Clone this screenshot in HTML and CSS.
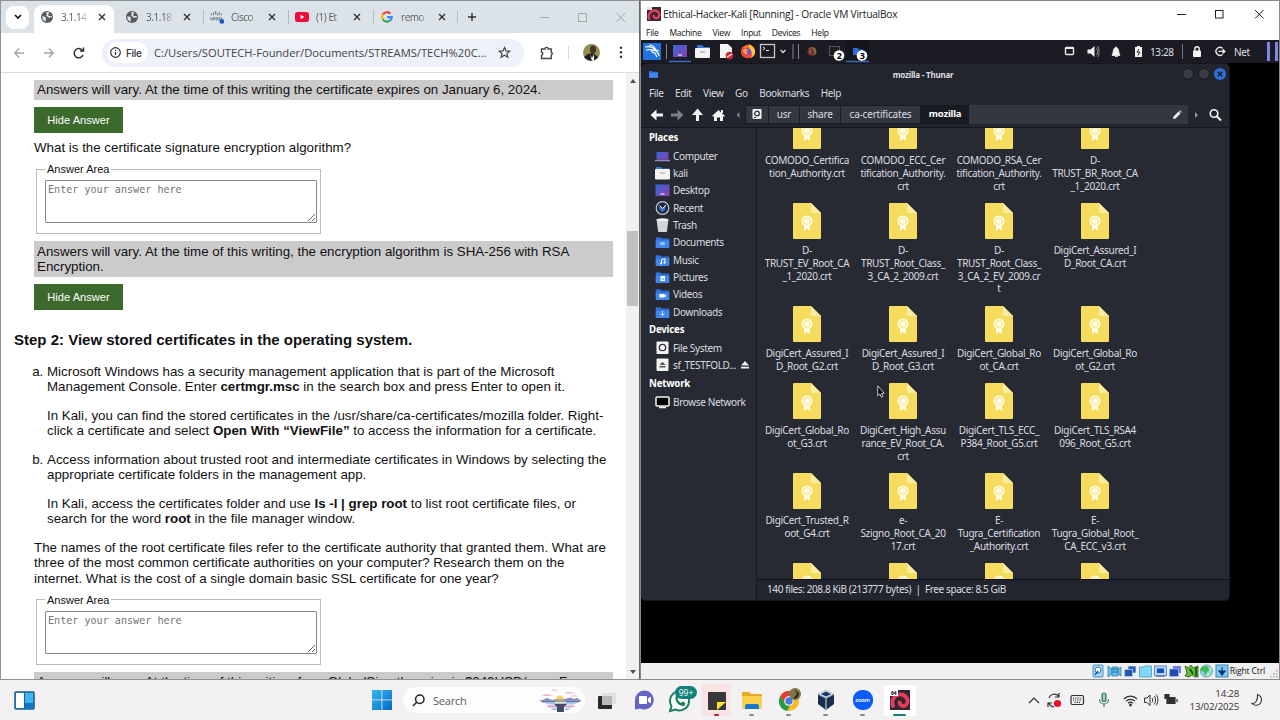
FILE: index.html
```html
<!DOCTYPE html>
<html lang="en">
<head>
    <meta charset="UTF-8">
    <title>Desktop</title>
    <link rel="stylesheet" href="styles.css">
</head>
<body>
    <svg class="defs" width="0" height="0">
        <defs>
            <linearGradient id="purple" x1="0" y1="0" x2="1" y2="1"><stop offset="0" stop-color="#3369d6"/><stop offset="1" stop-color="#8c3fb0"/></linearGradient>
            <linearGradient id="winblue" x1="0" y1="0" x2="1" y2="1"><stop offset="0" stop-color="#35b8f1"/><stop offset="1" stop-color="#0668c9"/></linearGradient>
        </defs>
        <symbol id="cert" viewBox="0 0 28 36">
            <path d="M1 0h17l10 10v25a1 1 0 0 1-1 1H1a1 1 0 0 1-1-1V1a1 1 0 0 1 1-1z" fill="#f5dc5f"/>
            <path d="M18 0l10 10H19a1 1 0 0 1-1-1z" fill="#faeba0"/>
            <path d="M11 21h6v7L14 25.800 11 28z" fill="#fffbe6"/>
            <circle cx="14" cy="18" r="5.500" fill="#fffbe6"/>
            <circle cx="14" cy="18" r="3.400" fill="none" stroke="#f5dc5f" stroke-width=".8"/>
        </symbol>
        <symbol id="globe" viewBox="0 0 12 12">
            <circle cx="6" cy="6" r="6" fill="#565b60"/>
            <path d="M1.300 5.200l2.700.6 1.200 1.400-.7 1.200.4 2.200C2.500 10.300 1 8.300 1.300 5.200zM5 1.200l2.600-.1.600 1-1.200 1.500.9 1.300 2.800.2.100 1.700-1.700-.5-1 .6-1.500-1.200L5 4.500l.8-1.200z" fill="#dfe5e9"/>
        </symbol>
        <symbol id="x" viewBox="0 0 8 8"><path d="M1 1l6 6M7 1L1 7" stroke="currentColor" stroke-width="1.400" fill="none"/></symbol>
        <symbol id="folder" viewBox="0 0 14 12">
            <path d="M0 2.500a1.300 1.300 0 0 1 1.300-1.300H4.500L6 2.500h6.700a1.300 1.300 0 0 1 1.300 1.300v6.900a1.300 1.300 0 0 1-1.300 1.300H1.300a1.300 1.300 0 0 1-1.300-1.300z" fill="#2d6ed8"/>
            <path d="M0 4.500h14v6.200a1.300 1.300 0 0 1-1.300 1.300H1.300a1.300 1.300 0 0 1-1.300-1.300z" fill="#3f86ef"/>
        </symbol>
        <symbol id="firefox" viewBox="0 0 16 16">
            <circle cx="8" cy="8.500" r="6.800" fill="#ff7426"/>
            <path d="M3 3c0 2 1 2 2 2l2 1 4-4c3 2 4.500 4 4 7-1 4-4 6-7 6s-7-2-7-6c0-3 1-4 2-6z" fill="#f8452f"/>
            <path d="M9 1c3 2 6 4 6 8 0 3-2 5-4 6 2-4 1-7-2-9z" fill="#ffc83a"/>
            <circle cx="7.500" cy="8.500" r="3.600" fill="#7d4ccb"/>
            <path d="M3 7c2-2 4-1 5 0-2 1-2 3 0 4-3 1-5-1-5-4z" fill="#ffa436"/>
        </symbol>
    </svg>

    <div class="desktop">
        <div class="windows">
            <!-- Browser -->
            <section class="browser">
                <div class="tabs">
                    <div class="tab-search"><svg width="8" height="6" viewBox="0 0 8 6"><path d="M1 1l3 3 3-3" fill="none" stroke="#111" stroke-width="1.600"/></svg></div>
                    <div class="tab active">
                        <svg class="fav"><use href="#globe"/></svg><span>3.1.14</span><svg class="x"><use href="#x"/></svg>
                    </div>
                    <div class="tab">
                        <svg class="fav"><use href="#globe"/></svg><span>3.1.18</span><svg class="x"><use href="#x"/></svg>
                    </div>
                    <div class="tab">
                        <svg class="fav wide" viewBox="0 0 16 14">
                            <path d="M1.500 3v2M4 1.500v3.500M6.500 0v4M8.500 3v2M10.500 1v4M13 3v2M1 7.500v3M3.500 7v4M5.500 7v3.500M8 7v4M10.500 7v4M13 7.500v3" stroke="#70777c" stroke-width="1.300"/>
                            <circle cx="13.500" cy="12" r="2.700" fill="#1857d1"/>
                        </svg><span>Cisco</span><svg class="x"><use href="#x"/></svg>
                    </div>
                    <div class="tab">
                        <svg class="fav wide" viewBox="0 0 14 10"><rect width="14" height="10" rx="2.500" fill="#f5093a"/><path d="M5.500 2.800v4.400L9.300 5z" fill="#fff"/></svg><span>(1) Et</span><svg class="x"><use href="#x"/></svg>
                    </div>
                    <div class="tab">
                        <svg class="fav" viewBox="0 0 12 12" fill="none" stroke-width="2.200">
                            <path d="M2 3.400A4.800 4.800 0 0 1 9.400 2.600" stroke="#e94335"/><path d="M1.800 8.400A4.800 4.800 0 0 1 2 3.400" stroke="#fabb05"/>
                            <path d="M1.800 8.300A4.800 4.800 0 0 0 8.800 9.700" stroke="#34a853"/><path d="M6 6.100h4.800A4.800 4.800 0 0 1 8.800 9.700" stroke="#4285f4"/>
                        </svg><span>remo</span><svg class="x"><use href="#x"/></svg>
                    </div>
                    <i class="tab-end"></i>
                    <svg class="plus" width="10" height="10" viewBox="0 0 10 10"><path d="M5 1v8M1 5h8" stroke="#333" stroke-width="1.400"/></svg>
                    <svg class="win-controls" width="88" height="12" viewBox="0 0 88 12" fill="none" stroke="#a3a8ab">
                        <path d="M1 6.500h9M77.500 2l8.500 9M86 2l-8.500 9"/><rect x="39.500" y="2.500" width="8" height="8"/>
                    </svg>
                </div>
                <div class="toolbar">
                    <svg class="nav" width="84" height="14" viewBox="0 0 84 14" fill="none" stroke-width="1.300">
                        <path d="M11 7H2M6.200 2.500L1.700 7l4.500 4.500M31 7h9M35.800 2.500L40.300 7l-4.500 4.500" stroke="#a2a5a8"/>
                        <path d="M69.500 4.500A4.600 4.600 0 1 0 70 9M70.500 1.500V5H67" stroke="#333" stroke-width="1.500"/>
                    </svg>
                    <div class="omnibox">
                        <span class="chip"><svg width="11" height="11" viewBox="0 0 11 11" fill="none" stroke="#333"><circle cx="5.500" cy="5.500" r="4.800" stroke-width="1.200"/><path d="M5.500 5v3M5.500 2.800v1.100" stroke-width="1.300"/></svg>File</span>
                        <span class="url">C:/Users/SOUTECH-Founder/Documents/STREAMS/TECH%20C...</span>
                        <svg class="star" width="13" height="13" viewBox="0 0 13 13"><path d="M6.500 1.500l1.500 3.400 3.700.3-2.800 2.400.9 3.600-3.300-1.900-3.300 1.900.9-3.600L1.300 5.200 5 4.900z" fill="none" stroke="#444" stroke-width="1.200"/></svg>
                    </div>
                    <svg class="ext" width="14" height="14" viewBox="0 0 14 14"><path d="M1.500 3H5a1.600 1.600 0 0 1 3.200 0h3v3.200a1.600 1.600 0 0 1 0 3V12.500H1.500V9.500a1.700 1.700 0 0 0 0-3.300z" fill="none" stroke="#444" stroke-width="1.400"/></svg>
                    <i class="bar-sep"></i>
                    <svg class="avatar" width="17" height="17" viewBox="0 0 17 17">
                        <circle cx="8.500" cy="8.500" r="8.500" fill="#8f9152"/><path d="M1 13l4-3 5-1 5 4a8.500 8.500 0 0 1-14 0z" fill="#1e211c"/><ellipse cx="10" cy="5.500" rx="3" ry="4" fill="#4b3426"/><path d="M7 10l2 4 2-4 0 6-2 1z" fill="#fff"/>
                    </svg>
                    <svg class="dots" width="4" height="13" viewBox="0 0 4 13" fill="#333"><circle cx="2" cy="1.700" r="1.200"/><circle cx="2" cy="6.300" r="1.200"/><circle cx="2" cy="10.900" r="1.200"/></svg>
                </div>
                <div class="viewport">
                    <main class="page">
                        <p class="answer">Answers will vary. At the time of this writing the certificate expires on January 6, 2024.</p>
                        <button class="hide">Hide Answer</button>
                        <p class="question">What is the certificate signature encryption algorithm?</p>
                        <fieldset><legend>Answer Area</legend><textarea placeholder="Enter your answer here"></textarea></fieldset>
                        <p class="answer">Answers will vary. At the time of this writing, the encryption algorithm is SHA-256 with RSA<br>Encryption.</p>
                        <button class="hide">Hide Answer</button>
                        <h2>Step 2: View stored certificates in the operating system.</h2>
                        <ol>
                            <li>
                                <p>Microsoft Windows has a security management application that is part of the Microsoft<br>Management Console. Enter <b>certmgr.msc</b> in the search box and press Enter to open it.</p>
                                <p>In Kali, you can find the stored certificates in the /usr/share/ca-certificates/mozilla folder. Right-<br>click a certificate and select <b>Open With “ViewFile”</b> to access the information for a certificate.</p>
                            </li>
                            <li>
                                <p>Access information about trusted root and intermediate certificates in Windows by selecting the<br>appropriate certificate folders in the management app.</p>
                                <p>In Kali, access the certificates folder and use <b>ls -l | grep root</b> to list root certificate files, or<br>search for the word <b>root</b> in the file manager window.</p>
                            </li>
                        </ol>
                        <p class="question">The names of the root certificate files refer to the certificate authority that granted them. What are<br>three of the most common certificate authorities on your computer? Research them on the<br>internet. What is the cost of a single domain basic SSL certificate for one year?</p>
                        <fieldset><legend>Answer Area</legend><textarea placeholder="Enter your answer here"></textarea></fieldset>
                        <p class="answer">Answers will vary. At the time of this writing, from GlobalSign the price is $249USD/year. From</p>
                    </main>
                    <div class="scrollbar"><i class="up"></i><i class="thumb"></i><i class="down"></i></div>
                </div>
            </section>

            <!-- Virtual machine -->
            <section class="vbox">
                <div class="vbox-title">
                    <svg width="14" height="14" viewBox="0 0 14 14"><rect width="14" height="14" fill="#3a2830"/><path d="M2.500 12.500C0 7 4 3 8 3.500c4 .5 5.500 5 3 7-2 1.500-5 0-4-2.500" fill="none" stroke="#e33f60" stroke-width="2.400"/><path d="M0 0h5v3H0z" fill="#ddd"/></svg>
                    <span>Ethical-Hacker-Kali [Running] - Oracle VM VirtualBox</span>
                    <svg class="win-controls" width="90" height="12" viewBox="0 0 90 12" fill="none" stroke="#222"><path d="M1 6.500h9M79 2l8.500 8.500M87.500 2L79 10.500"/><rect x="39.500" y="2.500" width="7.500" height="7.500"/></svg>
                </div>
                <nav class="vbox-menu"><span>File</span><span>Machine</span><span>View</span><span>Input</span><span>Devices</span><span>Help</span></nav>
                <div class="screen">
                    <div class="panel">
                        <svg class="launch" width="290" height="23" viewBox="0 0 290 23">
                            <rect x="2" y="3" width="18" height="17" rx="1" fill="#2272e0"/>
                            <path d="M4 7c4-1 8 0 10 3s4 2 4 6M5 10c4-1 7 0 9 1M8 5c5 0 6 3 7 5l3 1M11 10c-1 2 1 3 3 3l2 4" fill="none" stroke="#fff" stroke-width="1.200"/>
                            <path d="M25.500 4v15M152 4v15M157.500 4v15" stroke="#85868c"/>
                            <rect x="32" y="5" width="14" height="12" fill="url(#purple)"/><path d="M37 15h4" stroke="#fff"/>
                            <path d="M28 21.500h22M205 21.500h23" stroke="#3668c4" stroke-width="1.500"/>
                            <path d="M56 5h5l2 2h6v4H56z" fill="#3775dd"/><rect x="54" y="8" width="15" height="10" rx="1" fill="#f2f2f4"/><path d="M59 12h5" stroke="#999"/>
                            <path d="M79 4h8l4 4v10H79z" fill="#f5f5f5"/><circle cx="88.500" cy="15.500" r="3.800" fill="#cf2831"/><path d="M86 17l5-3" stroke="#fff" stroke-width="1.300"/>
                            <use href="#firefox" x="99" y="3" width="16" height="16"/>
                            <rect x="119.500" y="4.500" width="14" height="13" fill="#1b1c20" stroke="#c9c9cc" stroke-width="1.300"/>
                            <path d="M122 7l2 1.500-2 1.500M125 10.500h3" stroke="#eee" fill="none"/>
                            <path d="M139.500 10l2.500 2.500L144.500 10" stroke="#ddd" fill="none" stroke-width="1.300"/>
                            <g opacity=".5"><use href="#firefox" x="166" y="6" width="10" height="10"/><rect x="188.500" y="6.500" width="10" height="9" fill="#1b1c20" stroke="#8f8f93"/></g>
                            <rect x="205" y="0" width="23" height="20" fill="#15161c"/><path d="M212 8h5l1 1.500h4V15h-10z" fill="#2f6cdb"/>
                            <circle cx="198" cy="15.500" r="5.300" fill="#fff"/><circle cx="221" cy="15.500" r="5.300" fill="#fff"/>
                            <g class="badge-num"><text x="198" y="18.800">2</text><text x="221" y="18.800">3</text></g>
                        </svg>
                        <svg class="tray" width="90" height="23" viewBox="0 0 90 23">
                            <rect x="6.500" y="7.500" width="8" height="7" rx="1" fill="none" stroke="#e8e8ea" stroke-width="1.400"/><path d="M6 8h9" stroke="#e8e8ea" stroke-width="2"/>
                            <path d="M28.500 9.500h3l4-3.500v11l-4-3.500h-3z" fill="#f2f2f2"/><path d="M37 8c2 1 2 6 0 7M38.500 6c2 2 2 9 0 11" fill="none" stroke="#999"/>
                            <path d="M53 15.500c1.500-2 .5-7 4-8.500 3.500 1.500 2.500 6.500 4 8.500zM56 16.500h3" fill="#f2f2f2" stroke="#f2f2f2" stroke-width=".8"/>
                            <path d="M76 7h2V6h3v1h2v10h-7z" fill="#f2f2f2"/><path d="M80 9l-2 3.200h3L79 15.500" fill="none" stroke="#23242b"/>
                        </svg>
                        <span class="clock">13:28</span>
                        <svg class="session" width="50" height="23" viewBox="0 0 50 23"><path d="M4.500 4v15" stroke="#77787e"/><rect x="15" y="10.500" width="8" height="6.500" rx=".8" fill="#f2f2f2"/><path d="M16.800 11V9a2.200 2.200 0 0 1 4.400 0v2" fill="none" stroke="#f2f2f2" stroke-width="1.400"/><path d="M44.500 8.200A4 4 0 1 0 44.500 14.500M40.500 11.400h6M44.500 9.200l2.300 2.200-2.300 2.200" fill="none" stroke="#eee" stroke-width="1.400"/></svg>
                        <span class="net">Net</span>
                        <i class="meter"></i><i class="meter"></i>
                    </div>

                    <div class="thunar">
                        <div class="thunar-title">
                            <svg width="9" height="8"><use href="#folder"/></svg>
                            <b>mozilla - Thunar</b>
                            <i class="round"></i><i class="round"></i><i class="round close"><svg width="6" height="6" viewBox="0 0 8 8"><path d="M1 1l6 6M7 1L1 7" stroke="#0b1a36" stroke-width="2"/></svg></i>
                        </div>
                        <nav class="thunar-menu"><span>File</span><span>Edit</span><span>View</span><span>Go</span><span>Bookmarks</span><span>Help</span></nav>
                        <div class="location">
                            <svg class="arrows" width="103" height="20" viewBox="0 0 103 20">
                                <path d="M12 10h9" stroke="#f4f4f4" stroke-width="3"/><path d="M8.500 10l6-5.500v11z" fill="#f4f4f4"/>
                                <path d="M29 10h7" stroke="#7d7f85" stroke-width="3"/><path d="M41.500 10l-6-5.500v11z" fill="#7d7f85"/>
                                <path d="M55.500 8v8" stroke="#f4f4f4" stroke-width="3"/><path d="M55.500 3.500l5.500 6.500h-11z" fill="#f4f4f4"/>
                                <path d="M70 11l6.500-6 6.500 6-1 .8-1-.8v5h-3v-3.500h-3V16h-3v-5l-1 .8zM79 5h2v3h-2z" fill="#f4f4f4"/>
                                <path d="M97.500 7v6l-3-3z" fill="#7d7f85"/>
                            </svg>
                            <span class="crumb disk"><svg width="10" height="10" viewBox="0 0 10 10"><rect x=".5" width="9" height="10" rx="1" fill="#f2f2f2"/><circle cx="5" cy="4.500" r="2.300" fill="none" stroke="#2e313a" stroke-width="1.300"/><path d="M2 8.500h2" stroke="#2e313a"/></svg></span>
                            <span class="crumb usr">usr</span><span class="crumb share">share</span><span class="crumb ca">ca-certificates</span><span class="crumb current">mozilla</span>
                            <div class="path-rest"><svg width="10" height="10" viewBox="0 0 10 10"><path d="M1 9l.6-2.600L6.500 1.500l2 2L3.600 8.400zM7.200.9l.7-.6 1.800 1.800-.6.700z" fill="#f4f4f4"/></svg></div>
                            <svg class="find" width="40" height="20" viewBox="0 0 40 20"><path d="M7 7v6l3-3z" fill="#95979c"/><circle cx="26" cy="8.500" r="3.800" fill="none" stroke="#f4f4f4" stroke-width="1.600"/><path d="M28.500 11l4.500 4.500" stroke="#f4f4f4" stroke-width="2"/></svg>
                        </div>
                        <div class="thunar-body">
                            <aside class="places">
                                <h4>Places</h4>
                                <ul>
                                    <li><svg viewBox="0 0 15 14"><rect x="1.500" y="3" width="12" height="7.500" fill="url(#purple)"/><path d="M0 11.500h15" stroke="#8d90c8" stroke-width="1.300"/></svg>Computer</li>
                                    <li><svg viewBox="0 0 15 14"><path d="M1 1h5l1.500 1.500H14V6H1z" fill="#3775dd"/><rect y="3" width="15" height="10.500" rx="1" fill="#f3f3f5"/><path d="M5 7h5" stroke="#a0a0a4"/></svg>kali</li>
                                    <li><svg viewBox="0 0 15 14"><rect x=".5" y="1.500" width="14" height="11.500" fill="url(#purple)"/><path d="M5.500 11h4" stroke="#fff"/></svg>Desktop</li>
                                    <li><svg viewBox="0 0 15 14"><circle cx="7.500" cy="7" r="6.300" fill="#20273a" stroke="#c3c6d0" stroke-width="1.200"/><path d="M3 5l4.500 2.500L11 4l-1 5-2.500 2L5 9z" fill="#3a75dd"/><path d="M4.500 4.500l3 3L11 4" stroke="#fff" fill="none"/></svg>Recent</li>
                                    <li><svg viewBox="0 0 15 14"><path d="M1.500 1.500h12L12 13a1 1 0 0 1-1 1H4a1 1 0 0 1-1-1z" fill="#d4d5d8"/><ellipse cx="7.500" cy="1.700" rx="6" ry="1.400" fill="#f4f4f4"/></svg>Trash</li>
                                    <li><svg viewBox="0 0 15 14"><use href="#folder" x=".5" y="1" width="14" height="12"/><ellipse cx="7.500" cy="8.500" rx="2.800" ry="1.600" fill="#a7cbff"/></svg>Documents</li>
                                    <li><svg viewBox="0 0 15 14"><use href="#folder" x=".5" y="1" width="14" height="12"/><path d="M6.500 10.500V6.500l3.500-.8v4" stroke="#fff" fill="none"/><circle cx="6" cy="10.500" r="1" fill="#fff"/><circle cx="9.500" cy="9.800" r="1" fill="#fff"/></svg>Music</li>
                                    <li><svg viewBox="0 0 15 14"><use href="#folder" x=".5" y="1" width="14" height="12"/><rect x="5.500" y="6" width="4.500" height="5" fill="#fff"/><path d="M6.500 9h2.500" stroke="#3f86ef"/></svg>Pictures</li>
                                    <li><svg viewBox="0 0 15 14"><use href="#folder" x=".5" y="1" width="14" height="12"/><path d="M4.500 7h4.500v1l1.700-1v3.500l-1.700-1v1H4.500z" fill="#fff"/></svg>Videos</li>
                                    <li><svg viewBox="0 0 15 14"><use href="#folder" x=".5" y="1" width="14" height="12"/><path d="M7.500 5.800v4.500M5.500 8.500l2 2 2-2" stroke="#cfe3ff" fill="none"/></svg>Downloads</li>
                                </ul>
                                <h4>Devices</h4>
                                <ul>
                                    <li><svg viewBox="0 0 15 14"><rect x="1.500" y=".5" width="12" height="12.500" rx="1" fill="#f5f5f5"/><circle cx="7.500" cy="6.500" r="3.200" fill="none" stroke="#33363d" stroke-width="1.300"/></svg>File System</li>
                                    <li><svg viewBox="0 0 15 14"><rect x="1.500" y=".5" width="12" height="12.500" rx="1" fill="#f5f5f5"/><path d="M7.500 3.800l3 3.300h-6zM4.500 8h6v1.500h-6z" fill="#555"/></svg>sf_TESTFOLD...<svg class="eject" viewBox="0 0 8 8"><path d="M4 0l4 4.500H0zM0 5.800h8V7.500H0z" fill="#f0f0f0"/></svg></li>
                                </ul>
                                <h4>Network</h4>
                                <ul>
                                    <li><svg viewBox="0 0 15 14"><rect x="1" y="2" width="13" height="9" rx="1" fill="#000" stroke="#f5f5f5" stroke-width="1.500"/><path d="M4 12.500h7" stroke="#f5f5f5" stroke-width="1.500"/></svg>Browse Network</li>
                                </ul>
                            </aside>
                            <div class="main">
                                <div class="files">
                                    <div class="file"><svg><use href="#cert"/></svg>COMODO_Certifica<br>tion_Authority.crt</div>
                                    <div class="file"><svg><use href="#cert"/></svg>COMODO_ECC_Cer<br>tification_Authority.<br>crt</div>
                                    <div class="file"><svg><use href="#cert"/></svg>COMODO_RSA_Cer<br>tification_Authority.<br>crt</div>
                                    <div class="file"><svg><use href="#cert"/></svg>D-<br>TRUST_BR_Root_CA<br>_1_2020.crt</div>
                                    <div class="file"><svg><use href="#cert"/></svg>D-<br>TRUST_EV_Root_CA<br>_1_2020.crt</div>
                                    <div class="file"><svg><use href="#cert"/></svg>D-<br>TRUST_Root_Class_<br>3_CA_2_2009.crt</div>
                                    <div class="file"><svg><use href="#cert"/></svg>D-<br>TRUST_Root_Class_<br>3_CA_2_EV_2009.cr<br>t</div>
                                    <div class="file"><svg><use href="#cert"/></svg>DigiCert_Assured_I<br>D_Root_CA.crt</div>
                                    <div class="file"><svg><use href="#cert"/></svg>DigiCert_Assured_I<br>D_Root_G2.crt</div>
                                    <div class="file"><svg><use href="#cert"/></svg>DigiCert_Assured_I<br>D_Root_G3.crt</div>
                                    <div class="file"><svg><use href="#cert"/></svg>DigiCert_Global_Ro<br>ot_CA.crt</div>
                                    <div class="file"><svg><use href="#cert"/></svg>DigiCert_Global_Ro<br>ot_G2.crt</div>
                                    <div class="file"><svg><use href="#cert"/></svg>DigiCert_Global_Ro<br>ot_G3.crt</div>
                                    <div class="file"><svg><use href="#cert"/></svg>DigiCert_High_Assu<br>rance_EV_Root_CA.<br>crt</div>
                                    <div class="file"><svg><use href="#cert"/></svg>DigiCert_TLS_ECC_<br>P384_Root_G5.crt</div>
                                    <div class="file"><svg><use href="#cert"/></svg>DigiCert_TLS_RSA4<br>096_Root_G5.crt</div>
                                    <div class="file"><svg><use href="#cert"/></svg>DigiCert_Trusted_R<br>oot_G4.crt</div>
                                    <div class="file"><svg><use href="#cert"/></svg>e-<br>Szigno_Root_CA_20<br>17.crt</div>
                                    <div class="file"><svg><use href="#cert"/></svg>E-<br>Tugra_Certification<br>_Authority.crt</div>
                                    <div class="file"><svg><use href="#cert"/></svg>E-<br>Tugra_Global_Root_<br>CA_ECC_v3.crt</div>
                                    <div class="file"><svg><use href="#cert"/></svg></div>
                                    <div class="file"><svg><use href="#cert"/></svg></div>
                                    <div class="file"><svg><use href="#cert"/></svg></div>
                                    <div class="file"><svg><use href="#cert"/></svg></div>
                                </div>
                                <div class="status">140 files: 208.8 KiB (213777 bytes)&nbsp; |&nbsp; Free space: 8.5 GiB</div>
                            </div>
                        </div>
                    </div>
                    <svg class="cursor" width="8" height="13" viewBox="0 0 8 13"><path d="M.8.800v10l2-1.900 1.500 3.300 1.600-.7L4.500 8.300H7.200z" fill="#000" stroke="#ddd" stroke-width=".9"/></svg>
                </div>
                <div class="vbox-status">
                    <svg width="138" height="14" viewBox="0 0 138 14">
                        <rect x="1" y="1" width="10" height="12" rx="1" fill="#a5d8f5" stroke="#4a91c4"/><circle cx="6" cy="6" r="3" fill="#fff" stroke="#3474ae"/><path d="M3 11l3-4" stroke="#124e8c" stroke-width="1.300"/>
                        <path d="M16 2l4 3v5l-4 3zM20 3h6v9h-6zM29 3v9l-3-2V5z" fill="#6cc1e6" stroke="#2b84ba" stroke-width=".8"/><path d="M21 5h4M21 8h4" stroke="#155b9b"/>
                        <rect x="36" y="2" width="8" height="7" fill="#2d60bb" stroke="#d5e6ff" stroke-width=".7"/><rect x="32.500" y="5.500" width="8" height="7" fill="#2456ac" stroke="#bad5ff" stroke-width=".7"/>
                        <path d="M47.500 3h4l1-1h7v11h-12z" fill="#82d8f7" stroke="#499ec8" stroke-width=".8"/>
                        <rect x="62.500" y="2" width="12" height="9.500" fill="#aed6ff" stroke="#6687b8"/><rect x="65" y="4.500" width="7" height="4.500" fill="#174eae"/><path d="M64 12.500h9" stroke="#7389a8"/>
                        <rect x="81" y="2" width="8" height="7" fill="#7278e0"/><rect x="77.500" y="5" width="9" height="7.500" fill="#254ab5" stroke="#9db7ff" stroke-width=".7"/>
                        <path d="M93 2l3 2 3-3 2 3 5-2v11h-3l-3-2-3 2-4-1 2-3z" fill="#5fbd32" stroke="#285716" stroke-width=".8"/><path d="M98 5l3 5M104 3v9" stroke="#123e18" stroke-width="1.500"/>
                        <circle cx="114.500" cy="7" r="6" fill="#8fd9ed" stroke="#3898b8" stroke-width=".8"/><path d="M110 3l5-1 3 4-3 2-2 4-1-4-4-2z" fill="#40b94c"/><path d="M116 9v3M120 4l-3 2" stroke="#e4f36c" stroke-width="1.500"/>
                        <rect x="124" y="1" width="12" height="12" fill="#82c9ef" stroke="#4287ba"/><path d="M130 3v5M127 7h6l-3 4z" stroke="#0b3573" fill="#0b3573" stroke-width="1.200"/>
                    </svg>
                    <span>Right Ctrl</span>
                    <svg class="grip" width="8" height="8" viewBox="0 0 8 8" fill="#aaa"><path d="M6 0h1.500v1.500H6zM3 3h1.500v1.500H3zM6 3h1.500v1.500H6zM0 6h1.500v1.500H0zM3 6h1.500v1.500H3zM6 6h1.500v1.500H6z"/></svg>
                </div>
            </section>
        </div>

        <!-- Taskbar -->
        <footer class="taskbar">
            <svg class="widgets" width="21" height="19" viewBox="0 0 21 19"><rect x="1" y="1" width="19" height="17" rx="1" fill="#3cb7ee" stroke="#1d5f95" stroke-width="1.600"/><path d="M2 2h8v15H2z" fill="#fff"/><path d="M11 12h8v5h-8z" fill="#1470cd"/><path d="M10.500 1v17" stroke="#1d5f95"/></svg>
            <svg class="start" width="20" height="20" viewBox="0 0 20 20" fill="url(#winblue)"><path d="M0 0h9.500v9.500H0zM10.300 0H20v9.500h-9.700zM0 10.300h9.500V20H0zM10.300 10.300H20V20h-9.700z"/></svg>
            <div class="search">
                <svg width="13" height="13" viewBox="0 0 13 13" fill="none" stroke="#222" stroke-width="1.500"><circle cx="7.800" cy="5.200" r="4.200"/><path d="M4.700 8.300L1 12"/></svg>
                <span>Search</span>
                <svg class="scene" width="43" height="24" viewBox="0 0 43 24">
                    <path d="M12 2.500c2-2 5-1 6-.5l3 .5zM3 8c3-3 6-2 8-1l4 1zM25 5.500c3-2.500 6-2 8-1l5 1zM32 8.500c2-2 5-1 7 0z" fill="#efb9c6"/>
                    <path d="M2 12.500l6-2.500 5 2 4-1h9l5-1.500 4 1.500 3-1 4 2.500z" fill="#8a86b5"/>
                    <path d="M17 11.500a4 4 0 0 1 8 0z" fill="#f6d365"/>
                    <path d="M0 12.500h43l-4 2H4z" fill="#5f73a6"/>
                    <path d="M5 14.500h33l-3 2H9z" fill="#a3c9ea"/><path d="M16 13.500h11v1.500H16z" fill="#f3dc8c"/>
                    <path d="M7 17.500h13l-2 2h-8zM25 17.500h12l-4 2h-7z" fill="#d9a2c8"/><path d="M12 20.500h6v1.500h-5zM26 20.500h6l-3 1.500h-3z" fill="#8fb5e0"/>
                    <path d="M15 16h13l-3 3v5h-7v-5z" fill="#474b68"/>
                </svg>
            </div>
            <div class="apps">
                <span class="app"><svg viewBox="0 0 24 24"><rect x="9" y="5" width="14" height="11" fill="#dfe0e1"/><rect x="5" y="8" width="14" height="13" rx="1" fill="#292929"/><path d="M9 8h10v9H9z" fill="#b9babb"/></svg></span>
                <span class="app"><svg viewBox="0 0 24 24"><path d="M12 2.500a9.500 9.500 0 1 1-4 18L3 21.500V12a9.500 9.500 0 0 1 9-9.500z" fill="#6664c2"/><rect x="7" y="8" width="8" height="8" rx="1" fill="#fff"/><path d="M16 10.500l3-2v7l-3-2z" fill="#fff"/></svg></span>
                <span class="app"><svg class="wa" viewBox="0 0 30 28"><path d="M3 26l1.500-5a9.500 9.500 0 1 1 4 3.500z" fill="#fff" stroke="#16805d" stroke-width="2"/><path d="M8.500 12c-1 4 4 10 9 9l1-3-3-1.500-1.500 1.500c-2-1-3-3-3.500-4l1-1.500-1-2.500z" fill="#16805d"/><rect x="8" y="1" width="22" height="13" rx="6.500" fill="#10827a"/><text x="19" y="11">99+</text></svg></span>
                <span class="app alert"><svg viewBox="0 0 24 24"><rect x="3" y="4" width="18" height="18" rx="1" fill="#38383a"/><path d="M12 22v-8h9z" fill="#ffe32e"/></svg></span>
                <span class="app run"><svg viewBox="0 0 24 24"><path d="M2 4h7l2 2h10a1 1 0 0 1 1 1v14H2z" fill="#e9a825"/><path d="M2 8h20v13H2z" fill="#fccf4d"/><path d="M5 21v-3a2 2 0 0 1 2-2h10a2 2 0 0 1 2 2v3z" fill="#1477c9"/></svg></span>
                <span class="app run"><svg viewBox="0 0 24 24"><circle cx="12" cy="13" r="10" fill="#f6bb23"/><path d="M3.300 8A10 10 0 0 1 21 8.500H12A5 5 0 0 0 8 16z" fill="#df3e31"/><path d="M3.300 8L9 17.500h4L10 23A10 10 0 0 1 3.300 8z" fill="#219a4b"/><circle cx="12" cy="13" r="4.700" fill="#fff"/><circle cx="12" cy="13" r="3.700" fill="#3f7ee8"/><circle cx="18" cy="6" r="6" fill="#7c7648"/><path d="M18 1l2 5-4 5 4-1 2-4z" fill="#282720"/></svg></span>
                <span class="app run"><svg viewBox="0 0 24 24"><path d="M4 6l8-4 8 4v10l-8 6-8-6z" fill="#1b2e4e"/><path d="M4 6l8-4 8 4-8 4z" fill="#dce6f0"/><path d="M7 6l5-2.500L17 6l-5 2.500z" fill="#173862"/><path d="M4 6l8 4v12M20 6l-8 4" fill="none" stroke="#a9bdd0" stroke-width="1.300"/></svg></span>
                <span class="app run"><span class="zoom">zoom</span></span>
                <span class="app kali"><svg viewBox="0 0 24 24"><rect x="2" y="2" width="20" height="20" fill="#33262d"/><path d="M5.500 19.500C2 12 7 6 13 6.500c6 .5 8.500 7 5 10.500-3 2.500-7.500 0-6-4" fill="none" stroke="#e33c5d" stroke-width="3.800"/><rect x="2" y="2" width="8" height="6" fill="#fff"/><text x="3" y="7">64</text></svg></span>
            </div>
            <svg class="systray" width="160" height="24" viewBox="0 0 160 24" fill="none" stroke="#303030" stroke-width="1.200">
                <path d="M4 15l5-5 5 5"/>
                <path d="M24 10a5.500 5.500 0 0 1 10-1M34 5v4h-4M23 19v-4h4M24 15a6 6 0 0 0 5 4"/><circle cx="32.500" cy="15.500" r="3.600" fill="#e31123" stroke="none"/>
                <rect x="46" y="7.500" width="12.500" height="9" rx="1.500"/><path d="M48 10h9M48 12h9M49.500 14.300h6" stroke-dasharray="1.200 1"/>
                <rect x="77" y="5" width="4" height="8.500" rx="2" fill="#9dcac0" stroke="#35766a"/><path d="M74.500 11.500a4.500 4.500 0 0 0 9 0M79 16v3" stroke="#35766a"/>
                <path d="M99 11a9 9 0 0 1 13 0M101 13.200a6.300 6.300 0 0 1 9 0M103.200 15.300a3.400 3.400 0 0 1 4.600 0"/><circle cx="105.500" cy="17" r=".8" fill="#303030"/>
                <path d="M119.500 10h2.500l3-3v10.500L122 14.500h-2.500zM127 10c1 1 1 3 0 4.500M129 8c2 2 2 6 0 8.500M131 6.500c2.500 3 2.500 8 0 11" stroke-width="1"/>
                <path d="M142 9.500h8v6h-8zM152 11v3" fill="#303030"/><path d="M140 6.500v4h4v-4z" fill="#303030"/>
            </svg>
            <div class="datetime">14:28<br>13/02/2025</div>
            <svg class="moon" width="14" height="14" viewBox="0 0 14 14"><path d="M7.500 1.500a5.500 5.500 0 1 1-5.500 9c3 .5 6-3 5.500-9z" fill="none" stroke="#333" stroke-width="1.100"/></svg>
        </footer>
    </div>
</body>
</html>
```
FILE: styles.css
```css
* {
    box-sizing: border-box;
}

body {
    margin: 0;
    overflow: hidden;
    background: #000;
    font-family: "Open Sans", "Noto Sans", sans-serif;
}

p, h2, h4, ul, ol {
    margin: 0;
    padding: 0;
}

.defs {
    position: absolute;
}

.desktop {
    width: 1280px;
    height: 720px;
    display: flex;
    flex-direction: column;
}

.windows {
    display: flex;
    height: 680px;
}

svg {
    flex: none;
}

/* browser */
.browser {
    width: 640px;
    display: flex;
    flex-direction: column;
    background: #fff;
    border: 1px solid #8f9294;
    border-right-color: #666;
}

.tabs {
    height: 32px;
    display: flex;
    align-items: center;
    background: #dce3e8;
    padding-left: 5px;
    font-size: 10px;
    letter-spacing: -0.45px;
    color: #5a5e61;
}

.tab-search {
    width: 23px;
    height: 23px;
    margin-right: 5px;
    border-radius: 8px;
    background: #fff;
    display: flex;
    align-items: center;
    justify-content: center;
}

.tab {
    width: 85px;
    height: 28px;
    display: flex;
    align-items: center;
    padding-left: 8px;
}

.tab.active {
    width: 80px;
    height: 28px;
    margin: 4px 4px 0 0;
    padding: 0 0 4px 7px;
    background: #fff;
    border-radius: 8px 8px 0 0;
}

.tab span {
    width: 28px;
    margin: 0 9px 0 8px;
    overflow: hidden;
    white-space: nowrap;
    -webkit-mask-image: linear-gradient(90deg, #000 65%, transparent);
    mask-image: linear-gradient(90deg, #000 65%, transparent);
}

.fav {
    width: 12px;
    height: 12px;
}

.fav.wide {
    width: 14px;
    height: 14px;
    margin: 0 -1px;
}

.x {
    width: 8px;
    height: 8px;
    color: #333;
}

.tab + .tab + .tab {
    padding-left: 7px;
    border-left: 1px solid transparent;
    border-image: linear-gradient(transparent 28%, #b4bcc2 28% 72%, transparent 72%) 1;
}

.tab-end {
    width: 1px;
    height: 12px;
    margin-left: -1px;
    background: #b4bcc2;
}

.plus {
    margin-left: 9px;
}

.win-controls {
    margin-left: auto;
    margin-right: 12px;
}

.toolbar {
    height: 40px;
    display: flex;
    align-items: center;
    padding-left: 12px;
    border-bottom: 1px solid #dadcdf;
}

.nav {
    margin-right: 5px;
}

.omnibox {
    width: 422px;
    height: 28px;
    display: flex;
    align-items: center;
    padding-left: 5px;
    border-radius: 14px;
    background: #edf1f9;
}

.chip {
    width: 41px;
    height: 21px;
    display: flex;
    align-items: center;
    gap: 5px;
    padding-left: 3px;
    border-radius: 11px;
    background: #fff;
    font: 500 10px Inter, sans-serif;
    letter-spacing: -0.3px;
    color: #333;
}

.url {
    width: 334px;
    margin: 0 10px 0 6px;
    font-size: 11.2px;
    white-space: nowrap;
    color: #444;
}

.ext {
    margin-left: 16px;
}

.bar-sep {
    width: 1px;
    height: 13px;
    margin: 0 14px;
    background: #d3d9e4;
}

.dots {
    margin-left: 19px;
}

.viewport {
    flex: 1;
    min-height: 0;
    display: flex;
    overflow: hidden;
}

.page {
    width: 625px;
    padding: 6.5px 0 0 33px;
    font: 13.33px/15.45px "Liberation Sans", sans-serif;
    color: #111;
    white-space: nowrap;
}

.answer {
    width: 579px;
    padding: 2.5px 3px;
    background: #cbcbcb;
}

.hide {
    display: block;
    width: 89px;
    height: 26.5px;
    margin: 6.8px 0;
    padding: 0;
    border: 0;
    background: #3c692c;
    color: #fff;
    font: 11.1px "Liberation Sans", sans-serif;
}

.question {
    margin-bottom: 7.5px;
}

fieldset {
    width: 285px;
    height: 71px;
    margin: 0 2px 7px;
    padding: 5px 3px 0 8px;
    border: 1px solid #bbb;
    font-size: 11px;
    line-height: 12px;
}

legend {
    margin: 0;
    padding: 0 2px;
}

textarea {
    display: block;
    width: 272px;
    height: 43px;
    margin: 0;
    padding: 2px;
    border: 1px solid #888;
    border-radius: 1px;
    font: 10.1px/13px "DejaVu Sans Mono", monospace;
}

h2 {
    margin: 21px 0 15.5px -20px;
    font-size: 15px;
    line-height: 17px;
}

ol {
    list-style: lower-alpha;
    padding-left: 13px;
}

ol p {
    margin-bottom: 13.1px;
}

.scrollbar {
    width: 13px;
    display: flex;
    flex-direction: column;
    align-items: center;
    background: #f1f1f1;
}

.up, .down {
    border: 3px solid transparent;
    border-bottom: 4px solid #505050;
    border-top: 0;
    margin-top: 6px;
}

.thumb {
    width: 11px;
    height: 75px;
    margin-top: 148px;
    background: #c1c1c1;
}

.down {
    border-top: 4px solid #505050;
    border-bottom: 0;
    margin: auto 0 5px;
}

/* virtualbox window */
.vbox {
    width: 640px;
    display: flex;
    flex-direction: column;
    border: 1px solid #8a8a8a;
    background: #fff;
}

.vbox-title {
    height: 25px;
    display: flex;
    align-items: center;
    padding-left: 6px;
    gap: 2px;
    font-size: 10.2px;
    letter-spacing: -0.22px;
    color: #222;
    white-space: nowrap;
}

.vbox-title .win-controls {
    margin-right: 13px;
}

.vbox-menu {
    height: 14px;
    display: flex;
    gap: 11px;
    padding-left: 5px;
    font-size: 8.5px;
    letter-spacing: -0.25px;
    line-height: 14px;
    color: #111;
}

.screen {
    height: 623px;
    background: #000;
    position: relative;
    font-family: "Noto Sans", sans-serif;
}

.panel {
    height: 23px;
    display: flex;
    align-items: center;
    background: #1b1c23;
    color: #dedfe2;
    font-size: 10px;
    letter-spacing: -0.4px;
}

.badge-num {
    font: bold 9px "Noto Sans", sans-serif;
    text-anchor: middle;
}

.tray {
    margin-left: 128px;
}

.clock {
    width: 24px;
    margin-left: 1px;
}

.session {
    margin-left: 4px;
}

.net {
    width: 28px;
    margin-left: 6px;
}

.meter {
    width: 3px;
    height: 19px;
    margin-left: 5px;
    background: #8386e8;
}

.thunar {
    width: 589px;
    height: 538px;
    display: flex;
    flex-direction: column;
    background: #22252d;
    border-radius: 5px;
    border: 1px solid #15171c;
    border-left: 0;
    color: #dcdde0;
    font-size: 10px;
    letter-spacing: -0.35px;
    overflow: hidden;
}

.thunar-title {
    height: 20px;
    display: flex;
    align-items: center;
    padding: 0 3px 0 8px;
    gap: 4px;
}

.thunar-title b {
    flex: 1;
    padding-left: 6px;
    text-align: center;
    font-size: 8px;
    letter-spacing: -0.2px;
}

.round {
    width: 12px;
    height: 12px;
    border-radius: 50%;
    background: #383b43;
    border: 1px solid #15171c;
}

.round.close {
    display: flex;
    align-items: center;
    justify-content: center;
    background: #3070db;
    border: 0;
}

.thunar-menu {
    height: 20px;
    display: flex;
    gap: 11.5px;
    padding-left: 8px;
    line-height: 18px;
}

.location {
    height: 24px;
    display: flex;
    align-items: center;
    padding-bottom: 2px;
    border-bottom: 1px solid #15171c;
}

.location .arrows {
    width: 103px;
    margin-left: 1px;
}

.crumb {
    height: 19px;
    border: 1px solid #181a20;
    border-width: 1px 0 1px 1px;
    background: #333740;
    text-align: center;
    line-height: 16px;
    letter-spacing: -0.2px;
}

.disk {
    width: 23px;
    padding-top: 3px;
    line-height: 0;
}

.usr {
    width: 31px;
}

.share {
    width: 41px;
}

.ca {
    width: 80px;
}

.current {
    width: 49px;
    background: #191b22;
    font-weight: bold;
    color: #fff;
    font-size: 9.5px;
}

.path-rest {
    width: 219px;
    height: 19px;
    display: flex;
    align-items: center;
    justify-content: flex-end;
    padding-right: 6px;
    background: #333740;
}

.thunar-body {
    flex: 1;
    min-height: 0;
    display: flex;
    background: #272a33;
}

.places {
    width: 116px;
    border-right: 1px solid #15171c;
    padding-left: 8px;
    white-space: nowrap;
}

.places h4 {
    height: 19px;
    font-size: 9.7px;
    line-height: 20px;
    letter-spacing: -0.2px;
    color: #fff;
}

.places ul {
    list-style: none;
}

.places li {
    height: 17.35px;
    display: flex;
    align-items: center;
    padding-left: 6px;
}

.places li svg {
    width: 15px;
    height: 14px;
    margin-right: 3px;
}

.places li svg.eject {
    width: 8px;
    height: 8px;
    margin: 0 0 0 5px;
}

.main {
    flex: 1;
    display: flex;
    flex-direction: column;
}

.files {
    height: 451px;
    overflow: hidden;
    display: grid;
    grid-template-columns: repeat(4, 96px);
    grid-auto-rows: max-content;
    padding-left: 2px;
}

.file {
    padding-bottom: 10.75px;
    text-align: center;
    line-height: 12.75px;
    white-space: nowrap;
    letter-spacing: -0.32px;
}

.file svg {
    display: block;
    width: 28px;
    height: 36px;
    margin: 0 auto 5px;
}

.file:nth-child(-n+4) {
    margin-top: -15px;
}

.status {
    flex: 1;
    border-top: 1px solid #111318;
    background: #22252d;
    padding-left: 10px;
    line-height: 19px;
    letter-spacing: -0.4px;
}

.cursor {
    position: absolute;
    left: 236px;
    top: 345px;
}

.vbox-status {
    flex: 1;
    display: flex;
    align-items: center;
    justify-content: flex-end;
    background: #f0f0f0;
    font-size: 8.7px;
    letter-spacing: -0.2px;
    color: #111;
}

.grip {
    margin: 6px 1px 0 5px;
}

/* taskbar */
.taskbar {
    height: 40px;
    display: flex;
    align-items: center;
    background: #f3f1f2;
}

.widgets {
    margin-left: 14px;
}

.start {
    margin-left: 337px;
}

.search {
    width: 182px;
    height: 26px;
    display: flex;
    align-items: center;
    margin-left: 11px;
    padding-left: 9px;
    border-radius: 13px;
    background: #fdfdfd;
    font-size: 11px;
    letter-spacing: -0.2px;
    color: #5c5c5c;
}

.search span {
    width: 114px;
    padding-left: 8px;
}

.apps {
    display: grid;
    grid-template-columns: 39px 39px 37px 33px 37px 37px 37px 37px 37px;
    height: 40px;
    justify-items: center;
}

.app {
    position: relative;
    display: flex;
    align-items: center;
    justify-content: center;
}

.app svg {
    width: 24px;
    height: 24px;
}

.app svg.wa {
    width: 30px;
    height: 28px;
    margin-bottom: 3px;
}

.wa text {
    font-size: 8.5px;
    fill: #fff;
    text-anchor: middle;
}

/* running indicator under the icon */
.run::after, .alert::after, .kali::after {
    content: "";
    position: absolute;
    bottom: 4px;
    width: 5px;
    height: 2px;
    border-radius: 1px;
    background: #8b8b8b;
}

.alert::after {
    background: #b9262c;
}

.kali::after {
    width: 13px;
    background: #15807d;
}

.alert {
    width: 29px;
    background: linear-gradient(transparent 4px, #f9e3e4 4px 36px, transparent 36px);
}

.zoom {
    width: 20px;
    height: 20px;
    border-radius: 9px;
    background: #0b5cff;
    color: #fff;
    font: bold 6px/19px Lato, sans-serif;
    text-align: center;
}

.kali {
    width: 32px;
    background: linear-gradient(transparent 5px, #fff 5px 36px, transparent 36px);
}

.kali text {
    font-size: 5px;
    font-weight: bold;
}

.systray {
    margin-left: 107px;
}

.datetime {
    width: 52px;
    margin-left: 2px;
    text-align: right;
    font-size: 9.7px;
    letter-spacing: -0.2px;
    line-height: 13.3px;
    color: #333;
}

.moon {
    margin-left: 11px;
}
```
